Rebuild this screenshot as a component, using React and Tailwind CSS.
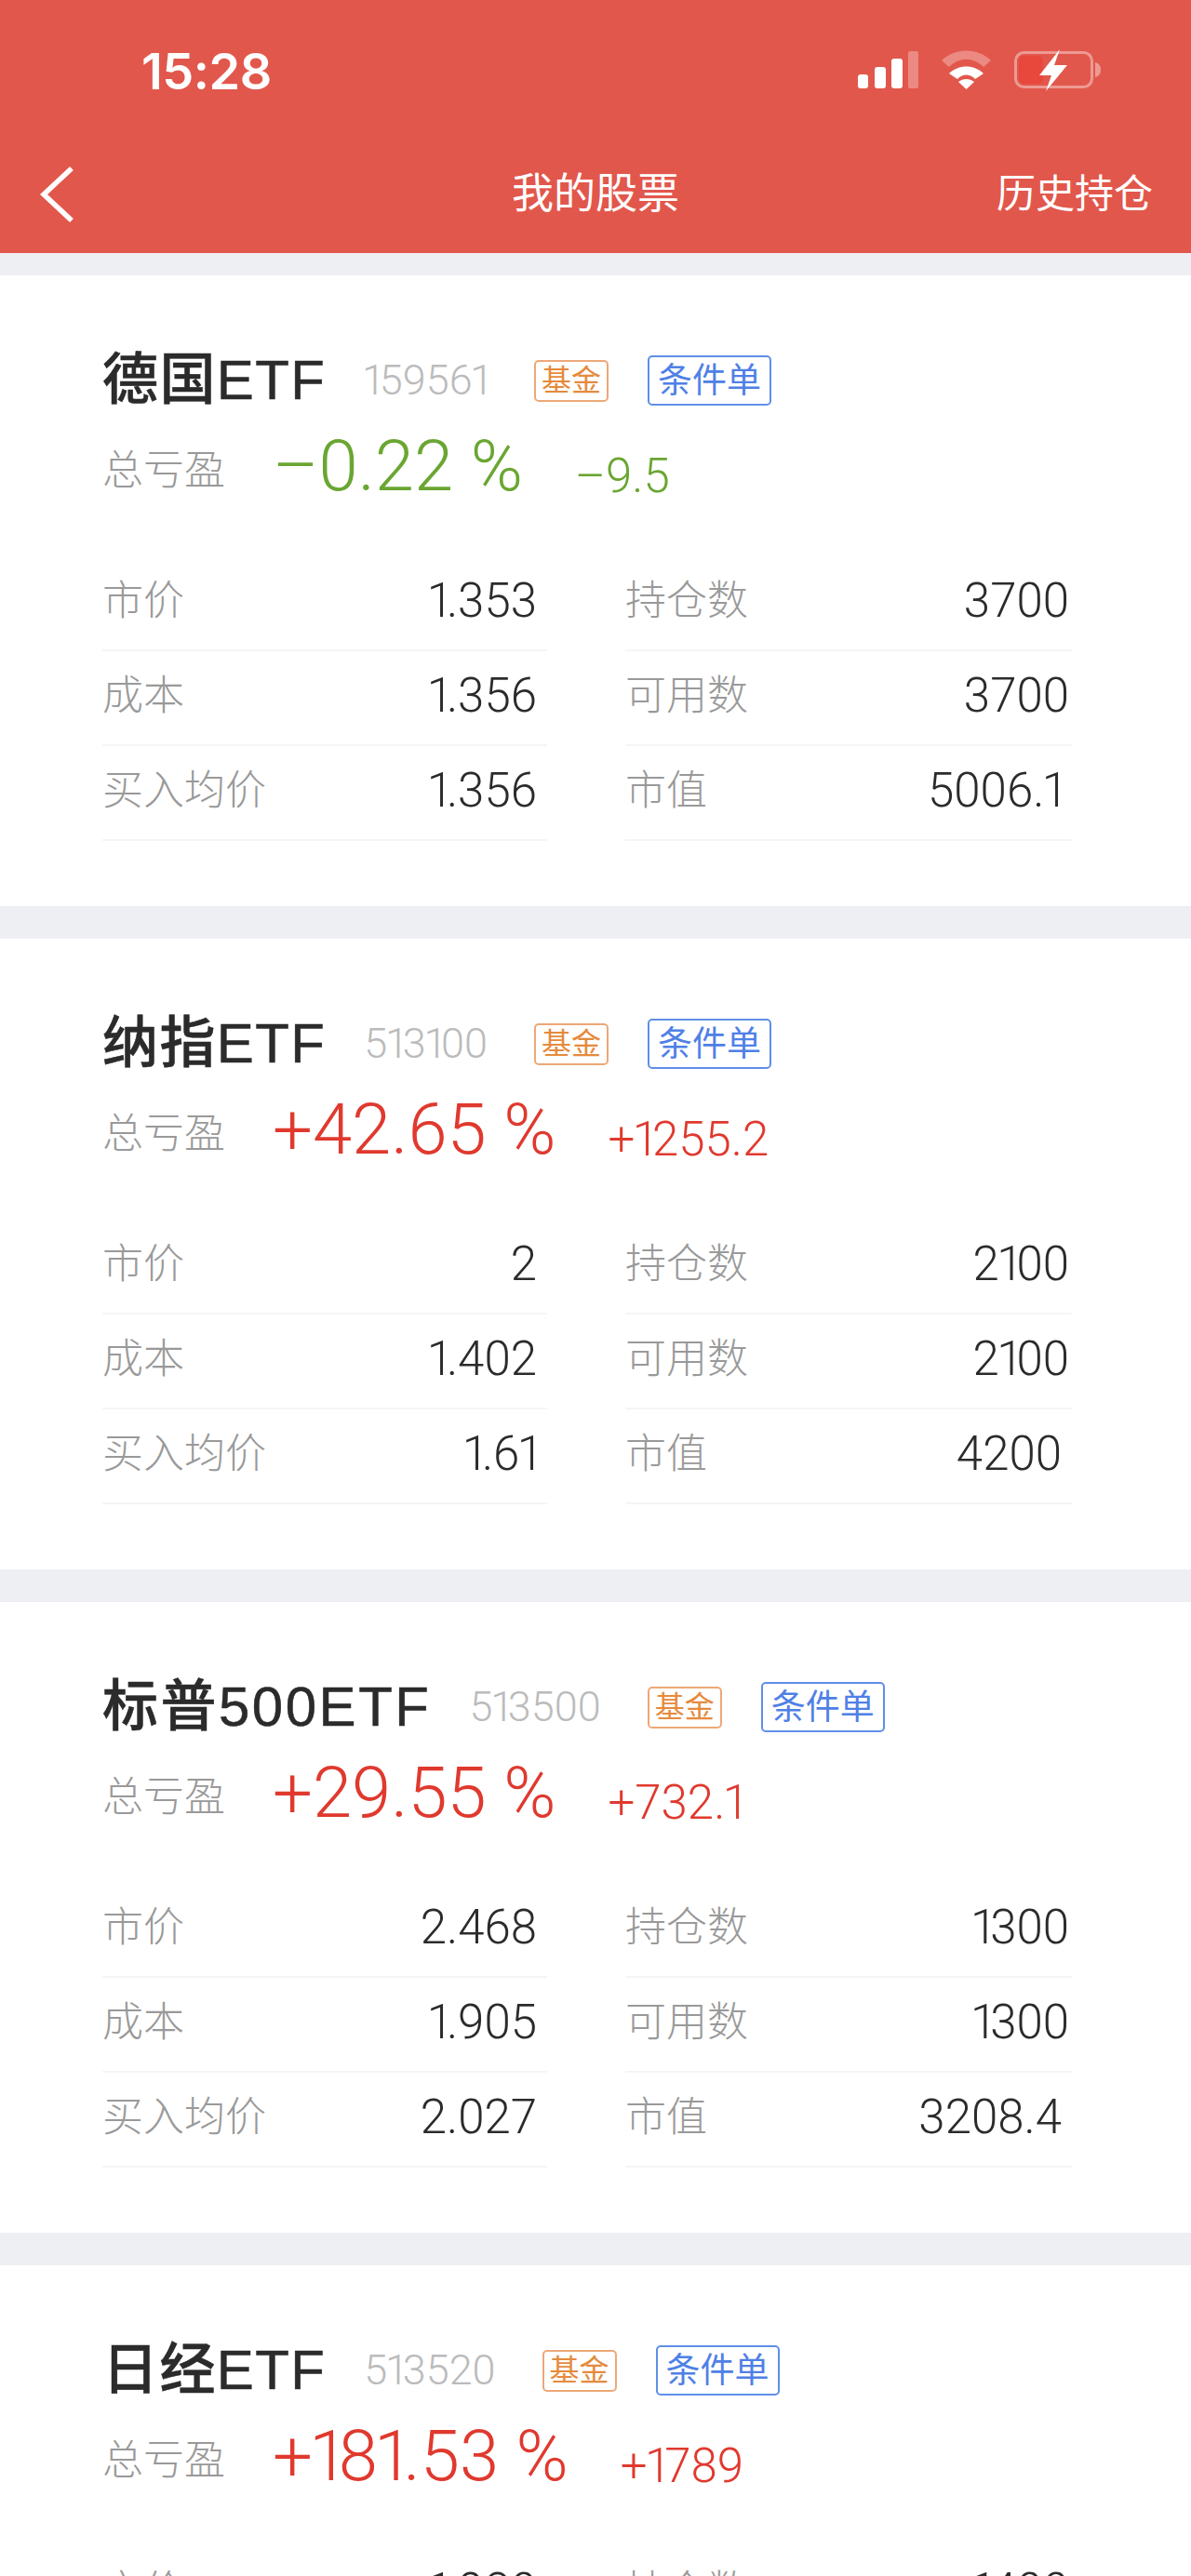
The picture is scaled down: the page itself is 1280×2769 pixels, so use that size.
// Pantalla "我的股票": cabecera roja y tarjetas de posiciones
const fuente = { fontFamily: '"Liberation Sans", "Noto Sans CJK SC", sans-serif' };

const posiciones = [
    {
        nombre: '德国ETF', codigo: '159561', color: 'text-[#6aa632]', pct: '–0.22 %', monto: '–9.5',
        tracking: 'tracking-[1.4px]',
        filas: [['市价', '1.353', '持仓数', '3700'], ['成本', '1.356', '可用数', '3700'], ['买入均价', '1.356', '市值', '5006.1']],
    },
    {
        nombre: '纳指ETF', codigo: '513100', color: 'text-[#e0392e]', pct: '+42.65 %', monto: '+1255.2',
        tracking: 'tracking-[1.4px]',
        filas: [['市价', '2', '持仓数', '2100'], ['成本', '1.402', '可用数', '2100'], ['买入均价', '1.61', '市值', '4200']],
    },
    {
        nombre: '标普500ETF', codigo: '513500', color: 'text-[#e0392e]', pct: '+29.55 %', monto: '+732.1',
        tracking: 'tracking-[2.5px]',
        filas: [['市价', '2.468', '持仓数', '1300'], ['成本', '1.905', '可用数', '1300'], ['买入均价', '2.027', '市值', '3208.4']],
    },
    {
        // la tarjeta queda cortada por el borde: solo se ve la primera fila
        nombre: '日经ETF', codigo: '513520', color: 'text-[#e0392e]', pct: '+181.53 %', monto: '+1789',
        tracking: 'tracking-[1.4px]',
        filas: [['市价', '1.980', '持仓数', '1400']],
    },
];

// El "1" de la fuente original es más estrecho que los demás dígitos
function Num({ children }) {
    const partes = children.split('1');
    return (
        <span className="font-['Roboto'] font-light">
            {partes.map((parte, i) => (
                <span key={i}>
                    {i > 0 && <span className="ml-[-0.05em] tracking-[-0.14em]">1</span>}
                    {parte}
                </span>
            ))}
        </span>
    );
}

function BarraEstado() {
    return (
        <div className="flex h-[152px] items-start justify-between pl-[152px] pr-[94px] pt-[47px]">
            <span className="font-['Inter'] text-[54px] font-semibold leading-[60px] tracking-[-0.5px] text-white">15:28</span>
            <svg width="264" height="50" viewBox="922 50 264 50" className="mt-[3px]" fill="white">
                {/* señal */}
                <rect x="922" y="80" width="11" height="15" rx="3" />
                <rect x="940" y="72" width="12" height="23" rx="3" />
                <rect x="958" y="63" width="12" height="32" rx="3" />
                <rect x="976" y="55" width="11" height="40" rx="2" opacity="0.3" />
                {/* wifi */}
                <path d="M1012 65 C1026 51 1051 51 1065 65 L1057 72 C1046 61 1031 61 1020 72 Z" opacity="0.3" />
                <path d="M1020 79 C1030 69 1047 69 1057 79 L1048 85 C1043 79 1034 79 1029 85 Z" />
                <path d="M1030 88 C1035 84 1042 84 1047 88 L1038.5 96 Z" />
                {/* batería */}
                <rect x="1091.5" y="56.5" width="82" height="37" rx="9" fill="none" stroke="white" strokeOpacity="0.4" strokeWidth="3" />
                <rect x="1095" y="60" width="26" height="30" rx="5" fill="#e8473b" />
                <path d="M1177 67 C1181 68 1183 71 1183 75 C1183 79 1181 82 1177 83 Z" opacity="0.4" />
                <path d="M1139 53 L1117 81 H1130 L1124 98 L1147 70 H1133 Z" />
            </svg>
        </div>
    );
}

function Cabecera() {
    return (
        <header className="h-[272px] bg-[#e2574c] text-white">
            <BarraEstado />
            <div className="flex h-[120px] items-start">
                <svg width="40" height="62" viewBox="0 0 40 62" className="ml-[41px] mt-[26px]" fill="none" stroke="white" strokeWidth="5.5">
                    <path d="M36 3 L6 31 L36 59" />
                </svg>
                <span className="ml-[469px] mt-[28px] text-[45px] leading-[58px]">我的股票</span>
                <span className="ml-[341px] mt-[28px] text-[42px] leading-[58px]">历史持仓</span>
            </div>
        </header>
    );
}

function Fila({ etiqueta, valor, ancho, margen }) {
    return (
        <div className={`flex h-[102px] items-center justify-between border-b-2 border-[#f5f5f6] pb-[4px] ${ancho}`}>
            <span className="text-[44px] font-light leading-[60px] text-[#999999]">{etiqueta}</span>
            <span className={`text-[51px] leading-[60px] text-[#2b2b2b] ${margen}`}>
                <Num>{valor}</Num>
            </span>
        </div>
    );
}

function Tarjeta({ p }) {
    return (
        <section className="h-[678px] bg-white pl-[110px] pt-[74px]">
            <div className="flex h-[78px] items-center">
                <h2 className={`text-[60px] font-medium leading-[78px] text-[#2b2b2b] [-webkit-text-stroke:0.5px_#2b2b2b] ${p.tracking}`}>{p.nombre}</h2>
                <span className="ml-[41px] text-[45px] leading-[50px] text-[#bbbbbb]">
                    <Num>{p.codigo}</Num>
                </span>
                <span className="ml-[50px] flex h-[45px] w-[80px] items-center justify-center rounded-[5px] border-2 border-[#eda878] text-[32px] leading-none text-[#e58a3c]">基金</span>
                <span className="ml-[42px] flex h-[54px] w-[133px] items-center justify-center rounded-[5px] border-2 border-[#5f8fe8] text-[37px] leading-none text-[#4f80e6]">条件单</span>
            </div>
            <div className="mt-[8px] flex h-[84px] items-baseline">
                <span className="w-[183px] -translate-y-[6px] text-[44px] font-light text-[#999999]">总亏盈</span>
                <span className={`text-[76px] leading-[90px] ${p.color}`}>
                    <Num>{p.pct}</Num>
                </span>
                <span className={`ml-[56px] translate-y-[2px] text-[51px] ${p.color}`}>
                    <Num>{p.monto}</Num>
                </span>
            </div>
            <div className="mt-[58px] flex">
                <div className="w-[478px]">
                    {p.filas.map((f) => (
                        <Fila key={f[0]} etiqueta={f[0]} valor={f[1]} ancho="w-[478px]" margen="mr-[11px]" />
                    ))}
                </div>
                <div className="ml-[84px] w-[480px]">
                    {p.filas.map((f, i) => (
                        <Fila key={f[2]} etiqueta={f[2]} valor={f[3]} ancho="w-[480px]" margen={i === 2 ? 'mr-[11px]' : 'mr-[3px]'} />
                    ))}
                </div>
            </div>
        </section>
    );
}

export default function App() {
    return (
        <div className="h-[2769px] w-[1280px] overflow-hidden bg-[#eeeff2]" style={fuente}>
            <Cabecera />
            <div className="flex flex-col gap-[35px] pt-[24px]">
                {posiciones.map((p) => (
                    <Tarjeta key={p.codigo} p={p} />
                ))}
            </div>
        </div>
    );
}
